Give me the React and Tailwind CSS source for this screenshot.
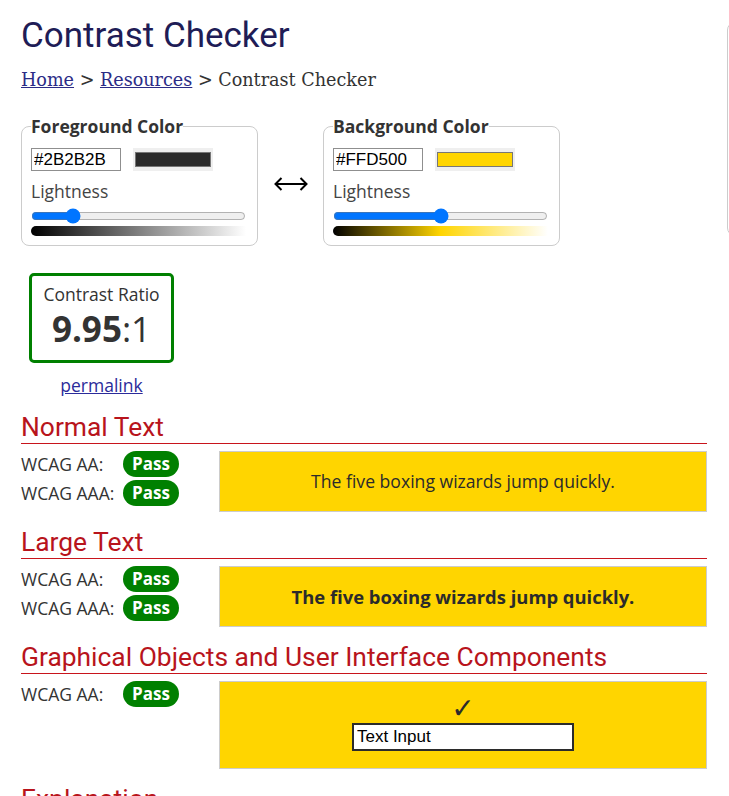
import { useState } from "react";

const sans = "font-['Open_Sans',sans-serif]";
const roboto = "font-[Roboto,sans-serif]";

function ColorField({ legend, hex, swatch, value, gradient }) {
  const [v, setV] = useState(value);

  return (
    <fieldset className="w-[237px] border border-[#cccccc] rounded-[8px] px-[9px] pt-[11px] pb-[9px]">
      <legend className={`${sans} text-[17.5px] leading-[22px] font-bold text-[#333333]`}>
        {legend}
      </legend>
      <div className="flex items-center gap-[12px]">
        <input
          type="text"
          defaultValue={hex}
          className="w-[90px] h-[23px] border border-[#8f8f8f] px-[2px] bg-white text-black font-['Liberation_Sans',Arial,sans-serif] text-[17px] leading-[21px]"
        />
        <div className="w-[80px] h-[23px] bg-[#efefef] px-[2px] pt-[4px] pb-[4px]">
          <div
            className="w-full h-full border border-[#777777]"
            style={{ backgroundColor: swatch }}
          />
        </div>
      </div>
      <div className={`${sans} mt-[8px] text-[17.5px] leading-[24px] text-[#444444]`}>
        Lightness
      </div>
      <input
        type="range"
        min="0"
        max="100"
        value={v}
        onChange={(e) => setV(e.target.value)}
        className="mt-[5px] block w-[215px] h-[16px]"
      />
      <div
        className="mt-[2px] w-[215px] h-[10px] rounded-l-[5px]"
        style={{ background: gradient }}
      />
    </fieldset>
  );
}

function Badge() {
  return (
    <span
      className={`${sans} inline-block h-[26px] px-[9px] rounded-full bg-[#008000] text-white font-bold text-[17px] leading-[26px]`}
    >
      Pass
    </span>
  );
}

function Row({ label, first }) {
  return (
    <div className={`flex items-center ${first ? "" : "mt-[3px]"}`}>
      <span className={`${sans} w-[102px] text-[17.5px] leading-[26px] text-[#333333]`}>
        {label}
      </span>
      <Badge />
    </div>
  );
}

function Section({ title, rows, children, first }) {
  return (
    <section className={first ? "" : "mt-[15px]"}>
      <h2
        className={`${roboto} text-[26.4px] leading-[31px] text-[#b8141c] border-b border-[#c8141c]`}
      >
        {title}
      </h2>
      <div className="mt-[7px] flex items-start">
        <div className="w-[198px] shrink-0">
          {rows.map((r, i) => (
            <Row key={r} label={r} first={i === 0} />
          ))}
        </div>
        {children}
      </div>
    </section>
  );
}

export default function App() {
  return (
    <div className="w-full overflow-hidden bg-white">
      <div className="flex w-[1100px] pl-[21px]">
        <main className="w-[686px] shrink-0 pt-[15px]">
          <h1 className={`${roboto} text-[35px] leading-[42px] text-[#201c56]`}>
            Contrast Checker
          </h1>
          <nav className="mt-[11px] font-['DejaVu_Serif',serif] text-[17.6px] leading-[24px] text-[#333333]">
            <a href="#" className="underline text-[#2b2b86]">
              Home
            </a>{" "}
            &gt;{" "}
            <a href="#" className="underline text-[#2b2b86]">
              Resources
            </a>{" "}
            &gt; Contrast Checker
          </nav>

          {/* Color pickers */}
          <div className="mt-[23px] flex items-center">
            <ColorField
              legend="Foreground Color"
              hex="#2B2B2B"
              swatch="#2b2b2b"
              value={17}
              gradient="linear-gradient(to right, #000000, #ffffff)"
            />
            <button
              aria-label="Swap colors"
              className="w-[65px] h-[40px] mt-[6px] flex items-center justify-center"
            >
              <svg width="34" height="14" viewBox="0 0 34 14" fill="none" stroke="#000" strokeWidth="2">
                <path d="M1.5 7h31" />
                <path d="M7.5 1L1.5 7l6 6" />
                <path d="M26.5 1l6 6-6 6" />
              </svg>
            </button>
            <ColorField
              legend="Background Color"
              hex="#FFD500"
              swatch="#ffd500"
              value={50}
              gradient="linear-gradient(to right, #000000, #ffd500 50%, #ffffff)"
            />
          </div>

          {/* Ratio */}
          <div className="mt-[27px] ml-[8px] w-[145px] text-center">
            <div className="border-[3px] border-[#008000] rounded-[5px] pt-[6px] pb-[9px]">
              <div className={`${sans} text-[17.5px] leading-[24px] text-[#333333]`}>
                Contrast Ratio
              </div>
              <div className={`${sans} mt-[1px] text-[35px] leading-[44px] text-[#333333]`}>
                <span className="font-bold">9.95</span>:1
              </div>
            </div>
            <a
              href="#"
              className={`${sans} block mt-[10px] text-[17.5px] leading-[24px] underline text-[#2b2b9a]`}
            >
              permalink
            </a>
          </div>

          <div className="mt-[15px]">
            <Section title="Normal Text" rows={["WCAG AA:", "WCAG AAA:"]} first>
              <div className="flex-1 h-[61px] flex items-center justify-center bg-[#ffd500] border border-[#cccccc]">
                <p className={`${sans} text-[17.6px] text-[#2b2b2b]`}>
                  The five boxing wizards jump quickly.
                </p>
              </div>
            </Section>

            <Section title="Large Text" rows={["WCAG AA:", "WCAG AAA:"]}>
              <div className="flex-1 h-[61px] flex items-center justify-center bg-[#ffd500] border border-[#cccccc]">
                <p className={`${sans} text-[18.4px] font-bold text-[#2b2b2b]`}>
                  The five boxing wizards jump quickly.
                </p>
              </div>
            </Section>

            <Section title="Graphical Objects and User Interface Components" rows={["WCAG AA:"]}>
              <div className="flex-1 h-[88px] flex flex-col items-center bg-[#ffd500] border border-[#cccccc] pt-[15px]">
                <span className="font-['DejaVu_Sans',sans-serif] text-[28px] leading-[24px] text-[#2b2b2b]">
                  ✓
                </span>
                <input
                  type="text"
                  defaultValue="Text Input"
                  className="mt-[2px] w-[222px] h-[28px] border-2 border-[#2b2b2b] bg-white px-[3px] text-black font-['Liberation_Sans',Arial,sans-serif] text-[17px]"
                />
              </div>
            </Section>

            <h2 className={`${roboto} mt-[15px] text-[26.4px] leading-[31px] text-[#b8141c]`}>
              Explanation
            </h2>
          </div>
        </main>

        <aside className="ml-[20px] mt-[22px] w-[300px] h-[214px] shrink-0 border border-[#cccccc] rounded-[8px]" />
      </div>
    </div>
  );
}
